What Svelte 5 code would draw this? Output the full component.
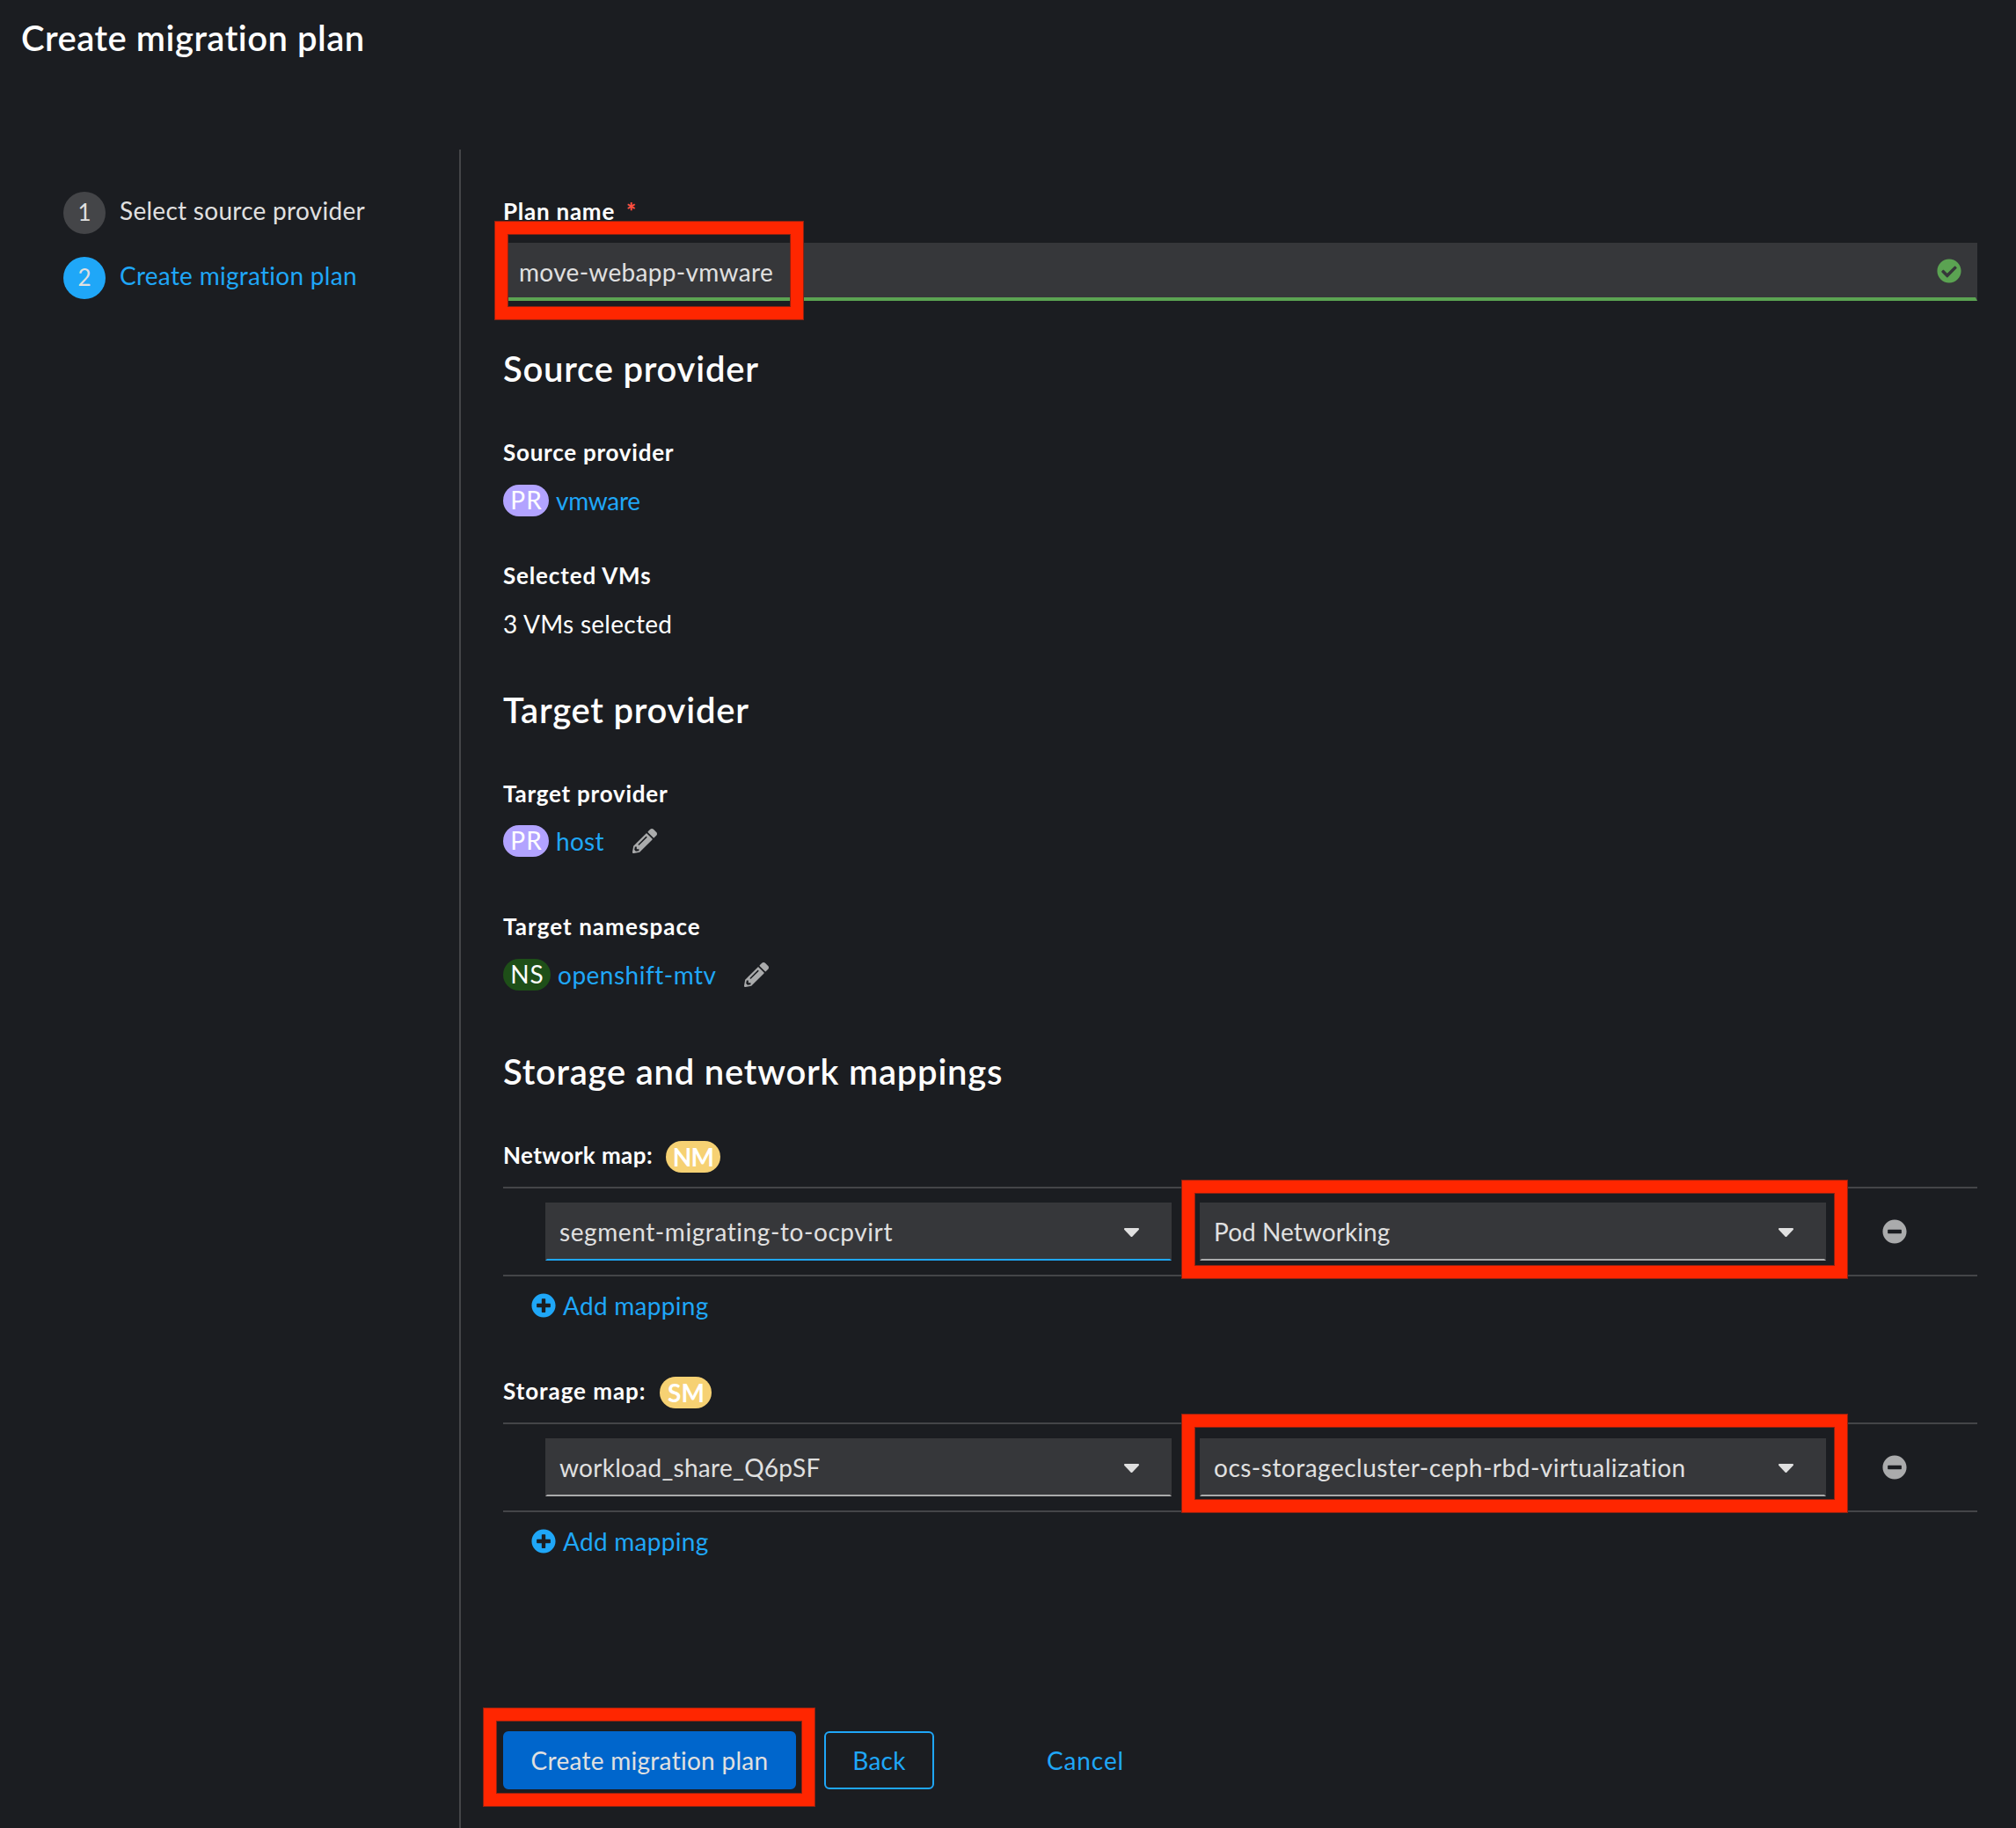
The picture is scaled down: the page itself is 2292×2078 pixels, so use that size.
<script>
  const steps = [
    { n: 1, label: 'Select source provider', active: false },
    { n: 2, label: 'Create migration plan', active: true }
  ];
  const mappings = [
    {
      label: 'Network map:', badge: 'NM', kind: 'network',
      source: 'segment-migrating-to-ocpvirt', target: 'Pod Networking', focused: true
    },
    {
      label: 'Storage map:', badge: 'SM', kind: 'storage',
      source: 'workload_share_Q6pSF', target: 'ocs-storagecluster-ceph-rbd-virtualization', focused: false
    }
  ];
</script>

{#snippet pencil()}
  <svg class="pencil" viewBox="0 0 512 512" aria-hidden="true"><path d="M497.9 142.1l-46.1 46.1c-4.7 4.7-12.3 4.7-17 0l-111-111c-4.7-4.7-4.7-12.3 0-17l46.1-46.1c18.7-18.7 49.1-18.7 67.9 0l60.1 60.1c18.8 18.7 18.8 49.1 0 67.9zM284.2 99.8L21.6 362.4.4 483.9c-2.9 16.4 11.4 30.6 27.8 27.8l121.5-21.3 262.6-262.6c4.7-4.7 4.7-12.3 0-17l-111-111c-4.8-4.7-12.4-4.7-17.1 0zM124.1 339.9c-5.5-5.5-5.5-14.3 0-19.8l154-154c5.5-5.5 14.3-5.5 19.8 0s5.5 14.3 0 19.8l-154 154c-5.5 5.5-14.3 5.5-19.8 0zM88 424h48v36.3l-64.5 11.3-31.1-31.1L51.7 376H88v48z" /></svg>
{/snippet}

{#snippet caret()}
  <svg class="caret" viewBox="11 192 298 169" preserveAspectRatio="none" aria-hidden="true"><path d="M31.3 192h257.3c17.8 0 26.7 21.5 14.1 34.1L174.1 354.7c-7.8 7.8-20.5 7.8-28.3 0L17.2 226.1C4.6 213.5 13.5 192 31.3 192z" /></svg>
{/snippet}

<div class="page">
  <header><h1>Create migration plan</h1></header>
  <div class="wizard">
    <nav>
      {#each steps as s}
        <div class="step" class:active={s.active}>
          <span class="num">{s.n}</span><span class="step-label">{s.label}</span>
        </div>
      {/each}
    </nav>
    <main>
      <div class="label plan">Plan name<span class="required">*</span></div>
      <div class="field">
        <span>move-webapp-vmware</span>
        <svg class="ok" viewBox="0 0 512 512" aria-hidden="true"><path d="M504 256c0 136.967-111.033 248-248 248S8 392.967 8 256 119.033 8 256 8s248 111.033 248 248zM227.314 387.314l184-184c6.248-6.248 6.248-16.379 0-22.627l-22.627-22.627c-6.248-6.249-16.379-6.249-22.628 0L216 308.118l-70.059-70.059c-6.248-6.248-16.379-6.248-22.628 0l-22.627 22.627c-6.248 6.248-6.248 16.379 0 22.627l104 104c6.249 6.249 16.379 6.249 22.628.001z" /></svg>
      </div>

      <h2 class="first">Source provider</h2>
      <div class="label">Source provider</div>
      <div class="value"><span class="badge pr">PR</span><a href="#vmware" class="vmware">vmware</a></div>
      <div class="label vms">Selected VMs</div>
      <div class="value">3 VMs selected</div>

      <h2 class="target">Target provider</h2>
      <div class="label">Target provider</div>
      <div class="value host"><span class="badge pr">PR</span><a href="#host">host</a>{@render pencil()}</div>
      <div class="label namespace">Target namespace</div>
      <div class="value"><span class="badge ns">NS</span><a href="#ns" class="wide">openshift-mtv</a>{@render pencil()}</div>

      <h2 class="maps">Storage and network mappings</h2>
      {#each mappings as m}
        <section class={m.kind}>
          <div class="map-head"><span class="label">{m.label}</span><span class="badge map">{m.badge}</span></div>
          <div class="map-row">
            <div class="select source" class:focused={m.focused}><span>{m.source}</span>{@render caret()}</div>
            <div class="select dest"><span>{m.target}</span>{@render caret()}</div>
            <svg class="minus" viewBox="0 0 512 512" aria-hidden="true"><path d="M256 8C119 8 8 119 8 256s111 248 248 248 248-111 248-248S393 8 256 8zM124 296c-6.600 0-12-5.400-12-12v-56c0-6.600 5.400-12 12-12h264c6.600 0 12 5.400 12 12v56c0 6.600-5.400 12-12 12H124z" /></svg>
          </div>
          <div class="add">
            <svg viewBox="0 0 512 512" aria-hidden="true"><path d="M256 8C119 8 8 119 8 256s111 248 248 248 248-111 248-248S393 8 256 8zm144 276c0 6.600-5.400 12-12 12h-92v92c0 6.600-5.400 12-12 12h-56c-6.600 0-12-5.400-12-12v-92h-92c-6.600 0-12-5.400-12-12v-56c0-6.600 5.400-12 12-12h92v-92c0-6.600 5.400-12 12-12h56c6.600 0 12 5.400 12 12v92h92c6.600 0 12 5.400 12 12v56z" /></svg>
            <span>Add mapping</span>
          </div>
        </section>
      {/each}

      <footer>
        <button class="primary">Create migration plan</button>
        <button class="secondary">Back</button>
        <button class="link">Cancel</button>
      </footer>
    </main>
  </div>

  <!-- highlight frames laid over the controls -->
  <div class="mark name"></div>
  <div class="mark net"></div>
  <div class="mark sto"></div>
  <div class="mark create"></div>
</div>

<style>
  :global(body) { margin: 0; background: #1b1d21; }
  .page {
    position: relative; box-sizing: border-box; height: 2078px; overflow: hidden;
    display: flex; flex-direction: column;
    background: #1b1d21; color: #fff;
    font-family: Lato, "Open Sans", sans-serif; font-size: 28px; letter-spacing: 0.28px;
  }
  header { height: 153px; padding: 17px 24px 0; }
  h1, h2 { margin: 0; font-size: 40px; line-height: 52px; font-weight: 600; white-space: nowrap; }
  h1 { letter-spacing: 0.5px; }
  h2 { letter-spacing: 0.76px; }
  .wizard { flex: 1; display: flex; }
  nav { width: 450px; padding: 48px 0 0 72px; display: flex; flex-direction: column; gap: 26px; }
  .step { display: flex; gap: 16px; height: 48px; color: #e0e0e0; }
  .step-label { line-height: 42px; }
  .num {
    width: 48px; height: 48px; border-radius: 50%; background: #444548;
    text-align: center; line-height: 46px; font-size: 26px; letter-spacing: 0;
  }
  .active .step-label { color: #1fa7f8; }
  .active .num { background: #1fa7f8; }

  main { flex: 1; border-left: 2px solid #444548; padding: 49px 44px 0 48px; }
  .label {
    height: 40px; font-size: 26px; line-height: 42px; font-weight: 700;
    letter-spacing: 0.76px; white-space: nowrap;
  }
  .plan { margin-bottom: 17px; }
  .required { color: #fe5142; font-weight: 900; margin-left: 13px; }
  .field, .select {
    box-sizing: border-box; height: 66px; display: flex; align-items: center; justify-content: space-between;
    background: #36373a; border: 2px solid #36373a; color: #e0e0e0;
  }
  .field { border-bottom: 4px solid #5ba352; padding: 0 16px 0 16px; }
  .field span { line-height: 58px; padding-top: 2px; letter-spacing: 0.32px; }
  .field svg { width: 28px; height: 28px; fill: #5ba352; }

  h2.first { margin-top: 51px; }
  h2 + .label { margin-top: 48px; }
  .value { display: flex; align-items: flex-start; height: 42px; line-height: 44px; margin-top: 14px; }
  .value.host { margin-top: 13px; }
  .vms { margin-top: 44px; letter-spacing: 0.85px; }
  h2.target { margin-top: 52px; }
  .namespace { margin-top: 56px; letter-spacing: 1.06px; }
  h2.maps { margin-top: 64px; }
  a { color: #1fa7f8; text-decoration: none; margin-left: 8px; }
  a.vmware { letter-spacing: -0.3px; }
  a.wide { letter-spacing: 0.5px; }
  a.wide + .pencil { margin-left: 31px; }
  .badge {
    box-sizing: border-box; height: 36px; padding-bottom: 2px; line-height: 34px; margin-top: 4px;
    border-radius: 18px; text-align: center; letter-spacing: 0; color: #fff; flex: none;
  }
  .pr { width: 52px; background: #b2a3ff; text-indent: 1px; letter-spacing: 1px; }
  .ns { width: 54px; background: #1e4f18; text-indent: 1px; letter-spacing: 1px; }
  .map { background: #f6d173; font-weight: 700; margin-top: 5px; line-height: 36px; padding-bottom: 0; }
  .pencil { width: 28px; height: 28px; margin: 8px 0 0 32px; fill: #aaabac; }

  section.network { margin-top: 48px; }
  section.storage { margin-top: 56px; }
  .map-head { display: flex; height: 57px; }
  .network .map { width: 62px; margin-left: 15px; letter-spacing: -0.8px; }
  .storage .map { width: 59px; margin-left: 16px; }
  .network .label { letter-spacing: 0.42px; }
  .storage .label { letter-spacing: 0.95px; }
  .map-row {
    box-sizing: border-box; height: 102px; display: flex; align-items: center; padding-left: 48px;
    border-top: 2px solid #444548; border-bottom: 2px solid #444548;
  }
  .select { width: 712px; padding: 0 35px 0 14px; border-bottom-color: #aaabac; }
  .select.focused { border-bottom-color: #1fa7f8; }
  .select + .select { margin-left: 32px; }
  .select span { line-height: 60px; white-space: nowrap; }
  .network .source span { letter-spacing: 0.58px; }
  .network .dest span { letter-spacing: 0.06px; }
  .storage .dest span { letter-spacing: 0.5px; }
  .caret { width: 17px; height: 10px; margin-top: 1px; fill: #e0e0e0; }
  .minus { width: 28px; height: 28px; margin-left: 64px; fill: #aaabac; }
  .add {
    display: flex; align-items: flex-start; gap: 8px; height: 42px; line-height: 44px;
    margin-top: 11px; padding-left: 32px; color: #1fa7f8;
  }
  .add svg { width: 28px; height: 28px; margin-top: 8px; fill: #1fa7f8; }

  footer { display: flex; margin-top: 196px; }
  button {
    box-sizing: border-box; height: 66px; padding: 0; border: 2px solid transparent; border-radius: 6px;
    background: none; font: inherit; line-height: 62px; letter-spacing: 0.28px; color: #1fa7f8; white-space: nowrap;
  }
  .primary { width: 333px; background: #06c; border-color: #06c; color: #e0e0e0; }
  .secondary { width: 125px; margin-left: 32px; border-color: #1fa7f8; }
  .link { width: 170px; margin-left: 87px; letter-spacing: 0.9px; }

  .mark {
    position: absolute; box-sizing: border-box; border: 14px solid #ff2600;
    box-shadow: 0 0 0 1px #8d2212, inset 0 0 0 1px #8d2212;
  }
  .mark.name { left: 563px; top: 252px; width: 350px; height: 111px; }
  .mark.net { left: 1344px; top: 1342px; width: 756px; height: 111px; }
  .mark.sto { left: 1344px; top: 1608px; width: 756px; height: 111px; }
  .mark.create { left: 550px; top: 1942px; width: 376px; height: 111px; }
</style>
